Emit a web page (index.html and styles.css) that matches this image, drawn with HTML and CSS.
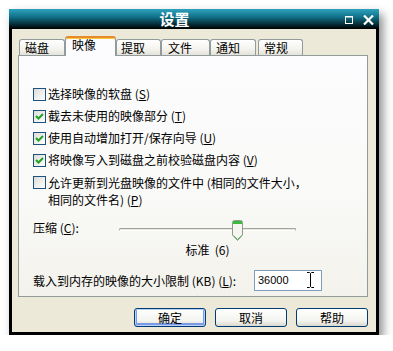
FILE: index.html
```html
<!DOCTYPE html>
<html lang="zh-CN">

<head>
  <meta charset="UTF-8">
  <title>设置</title>
  <link rel="stylesheet" href="styles.css">
</head>

<body>
  <div class="window">
    <div class="titlebar">
      <div class="title">设置</div>
      <div class="title-btns">
        <svg class="btn-max" width="8" height="8" viewBox="0 0 8 8">
          <rect x="0.5" y="0.5" width="7" height="7" fill="none" stroke="#fff" stroke-width="1"/>
          <line x1="0" y1="1" x2="8" y2="1" stroke="#fff" stroke-width="1"/>
        </svg>
        <svg class="btn-close" width="11" height="10" viewBox="0 0 11 10">
          <path d="M1 0.5 L10 9.5 M10 0.5 L1 9.5" stroke="#fff" stroke-width="2.2"/>
        </svg>
      </div>
    </div>

    <div class="content">
      <ul class="tabs">
        <li class="tab">磁盘</li>
        <li class="tab active">映像</li>
        <li class="tab">提取</li>
        <li class="tab">文件</li>
        <li class="tab">通知</li>
        <li class="tab">常规</li>
      </ul>

      <div class="panel">
        <div class="check">
          <span class="box"></span>
          <span>选择映像的软盘 (<u>S</u>)</span>
        </div>
        <div class="check">
          <span class="box"><svg width="11" height="11" viewBox="0 0 11 11"><path d="M2 5 L4.5 7.5 L9 3" fill="none" stroke="#21A121" stroke-width="2"/></svg></span>
          <span>截去未使用的映像部分 (<u>T</u>)</span>
        </div>
        <div class="check">
          <span class="box"><svg width="11" height="11" viewBox="0 0 11 11"><path d="M2 5 L4.5 7.5 L9 3" fill="none" stroke="#21A121" stroke-width="2"/></svg></span>
          <span>使用自动增加打开/保存向导 (<u>U</u>)</span>
        </div>
        <div class="check">
          <span class="box"><svg width="11" height="11" viewBox="0 0 11 11"><path d="M2 5 L4.5 7.5 L9 3" fill="none" stroke="#21A121" stroke-width="2"/></svg></span>
          <span>将映像写入到磁盘之前校验磁盘内容 (<u>V</u>)</span>
        </div>
        <div class="check two-line">
          <span class="box"></span>
          <span>允许更新到光盘映像的文件中 (相同的文件大小，<br>相同的文件名) (<u>P</u>)</span>
        </div>

        <div class="slider-row">
          <span class="slider-label">压缩 (<u>C</u>):</span>
          <div class="slider">
            <div class="track"></div>
            <svg class="thumb" width="11" height="21" viewBox="0 0 11 21">
              <path d="M0.5 2.5 Q0.5 0.5 2.5 0.5 H8.5 Q10.5 0.5 10.5 2.5 V15 L5.5 20.5 L0.5 15 Z" fill="#F5F5F1" stroke="#8E9B8A"/>
              <rect x="1" y="1" width="9" height="3" fill="#3EB83E"/>
              <path d="M1.5 15.5 L5.5 19.5 L9.5 15.5" fill="none" stroke="#58B058" stroke-width="1"/>
            </svg>
          </div>
        </div>
        <div class="slider-value">标准&nbsp; (6)</div>

        <div class="size-row">
          <span class="size-label">载入到内存的映像的大小限制 (KB) (<u>L</u>):</span>
          <div class="field">
            36000
            <svg class="ibeam" width="7" height="16" viewBox="0 0 7 16">
              <path d="M0 0.5 H2.5 L3.5 1.5 L4.5 0.5 H7 M3.5 1.5 V14.5 M0 15.5 H2.5 L3.5 14.5 L4.5 15.5 H7" fill="none" stroke="#000" stroke-width="1"/>
            </svg>
          </div>
        </div>
      </div>

      <div class="buttons">
        <div class="btn default">确定</div>
        <div class="btn">取消</div>
        <div class="btn">帮助</div>
      </div>
    </div>
  </div>
</body>

</html>
```

FILE: styles.css
```css
* {
  margin: 0;
  padding: 0;
}

body {
  background-color: #fff;
  padding: 9px 0 0 9px;
  font-family: "Noto Sans CJK SC", "Liberation Sans", sans-serif;
  font-size: 12px;
  line-height: 14px;
  color: #000;
}

li {
  list-style: none;
}

u {
  text-decoration: underline;
  text-underline-offset: 1px;
}

.window {
  width: 370px;
  height: 326px;
  box-sizing: border-box;
  border: 3px solid #000;
  border-top: 0;
  background-color: #ECE9D8;
  box-shadow: 4px 5px 9px rgba(0, 0, 0, 0.45);
}

/* 标题栏 */
.titlebar {
  height: 20px;
  margin: 0 -3px;
  display: flex;
  align-items: center;
  background: linear-gradient(#2ea3bd, #11718a 40%, #04262e 80%, #000);
}

.title {
  flex: 1;
  text-align: center;
  color: #fff;
  font-weight: bold;
  font-size: 15px;
  line-height: 20px;
}

.title-btns {
  width: 39px;
  box-sizing: border-box;
  padding-left: 5px;
  display: flex;
  align-items: center;
  gap: 10px;
}

.btn-max {
  margin-top: 1px;
}

.btn-close {
  margin-top: 2px;
}

.content {
  padding: 7px 8px 0 6px;
}

/* 选项卡 */
.tabs {
  display: flex;
  align-items: flex-end;
  height: 19px;
  padding-left: 1px;
}

.tab {
  box-sizing: border-box;
  width: 46px;
  height: 16px;
  padding-left: 5px;
  border: 1px solid #919B9C;
  border-bottom: 0;
  border-radius: 3px 3px 0 0;
  background: linear-gradient(#fff, #F4F3EE 60%, #E4E2D9);
  line-height: 15px;
}

.tab:nth-child(3) {
  width: 45px;
  padding-left: 4px;
}

.tab:nth-child(4) {
  width: 49px;
  padding-left: 6px;
}

.tab:nth-child(6) {
  width: 45px;
  margin-left: 2px;
}

.tab.active {
  position: relative;
  z-index: 1;
  width: 51px;
  height: 20px;
  margin-bottom: -1px;
  padding-left: 6px;
  border-top: 2px solid #E68B2C;
  background: #FCFCFE;
  box-shadow: inset 0 1px #FFC73C;
  line-height: 14px;
}

.panel {
  box-sizing: border-box;
  height: 242px;
  padding: 31px 0 0 14px;
  border: 1px solid #919B9C;
  background: linear-gradient(#FCFCFE, #F9F9F7 60%, #F3F2EC);
}

/* 复选框 */
.check {
  display: flex;
  gap: 2px;
  margin-bottom: 8px;
}

.check:nth-child(4) {
  margin-top: 3px;
}

.check.two-line {
  margin-top: -1px;
  line-height: 17px;
}

.check.two-line .box {
  margin-top: 2px;
}

.box {
  flex: none;
  width: 13px;
  height: 13px;
  box-sizing: border-box;
  border: 1px solid #1C5180;
  background: linear-gradient(135deg, #DCDCD7, #FFFFFF);
  margin-top: 1px;
}

.box svg {
  display: block;
}

/* 压缩滑块 */
.slider-row {
  display: flex;
  margin-top: 12px;
  height: 21px;
}

.slider-label {
  width: 86px;
  margin-top: 1px;
}

.slider {
  position: relative;
  width: 177px;
}

.track {
  margin-top: 8px;
  height: 3px;
  box-sizing: border-box;
  border: 1px solid #A3A39B;
  border-bottom-color: #fff;
  border-radius: 2px;
  background-color: #E6E5DE;
}

.thumb {
  position: absolute;
  left: 113px;
  top: 0;
}

.slider-value {
  width: 177px;
  margin: 2px 0 0 86px;
  text-align: center;
}

/* 大小限制 */
.size-row {
  display: flex;
  align-items: center;
  margin-top: 13px;
}

.size-label {
  width: 221px;
}

.field {
  position: relative;
  box-sizing: border-box;
  width: 68px;
  height: 21px;
  padding-left: 3px;
  border: 1px solid #7F9DB9;
  background-color: #fff;
  font-family: "Liberation Sans", sans-serif;
  font-size: 11px;
  line-height: 19px;
}

.ibeam {
  position: absolute;
  left: 52px;
  top: 1px;
}

/* 底部按钮 */
.buttons {
  display: flex;
  justify-content: flex-end;
  gap: 9px;
  margin-top: 11px;
}

.btn {
  width: 72px;
  height: 19px;
  box-sizing: border-box;
  border: 1px solid #003C74;
  border-radius: 3px;
  background: linear-gradient(#fff, #F3F3EF 70%, #DCD8CE);
  text-align: center;
  line-height: 17px;
}

.btn.default {
  box-shadow: inset 0 0 0 1px #B9D1F6, inset 0 -1px 0 2px #7C9BE6;
}
```
